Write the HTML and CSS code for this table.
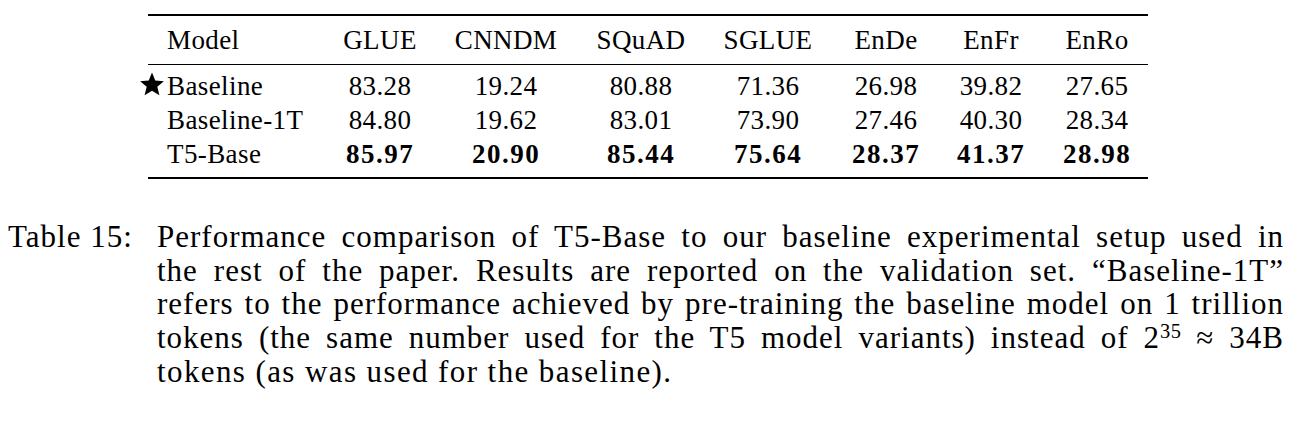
FILE: index.html
```html
<!DOCTYPE html>
<html lang="en">
<head>
<meta charset="utf-8">
<title>Table 15</title>
<link rel="stylesheet" href="styles.css">
</head>
<body>
<div class="page">
  <div class="table">
    <div class="row head">
      <div class="cell model">Model</div>
      <div class="cell">GLUE</div>
      <div class="cell">CNNDM</div>
      <div class="cell">SQuAD</div>
      <div class="cell">SGLUE</div>
      <div class="cell">EnDe</div>
      <div class="cell">EnFr</div>
      <div class="cell">EnRo</div>
    </div>
    <div class="body">
      <div class="row">
        <div class="cell model"><svg class="star" viewBox="0 0 24 24" aria-hidden="true"><polygon points="12,0.5 15.1,8.2 23.4,8.8 17.1,14.2 19.1,22.3 12,17.9 4.9,22.3 6.9,14.2 0.6,8.8 8.9,8.2"/></svg>Baseline</div>
        <div class="cell">83.28</div>
        <div class="cell">19.24</div>
        <div class="cell">80.88</div>
        <div class="cell">71.36</div>
        <div class="cell">26.98</div>
        <div class="cell">39.82</div>
        <div class="cell">27.65</div>
      </div>
      <div class="row">
        <div class="cell model">Baseline-1T</div>
        <div class="cell">84.80</div>
        <div class="cell">19.62</div>
        <div class="cell">83.01</div>
        <div class="cell">73.90</div>
        <div class="cell">27.46</div>
        <div class="cell">40.30</div>
        <div class="cell">28.34</div>
      </div>
      <div class="row">
        <div class="cell model">T5-Base</div>
        <div class="cell best">85.97</div>
        <div class="cell best">20.90</div>
        <div class="cell best">85.44</div>
        <div class="cell best">75.64</div>
        <div class="cell best">28.37</div>
        <div class="cell best">41.37</div>
        <div class="cell best">28.98</div>
      </div>
    </div>
  </div>
  <div class="caption">
    <div class="label">Table 15:</div>
    <div class="text">
      <span class="line">Performance comparison of T5-Base to our baseline experimental setup used in</span>
      <span class="line">the rest of the paper. Results are reported on the validation set. “Baseline-1T”</span>
      <span class="line">refers to the performance achieved by pre-training the baseline model on 1 trillion</span>
      <span class="line">tokens (the same number used for the T5 model variants) instead of 2<sup class="sup">35</sup> ≈ 34B</span>
      <span class="line last">tokens (as was used for the baseline).</span>
    </div>
  </div>
</div>
</body>
</html>
```
FILE: styles.css
```css
html, body {
  margin: 0;
  padding: 0;
  background: #ffffff;
}

body {
  color: #000000;
  font-family: "Liberation Serif", "Times New Roman", serif;
}

.page {
  padding: 14px 0 0 8px;
}

.table {
  margin-left: 140px;
  width: 1000px;
  border-top: 2px solid #000;
  border-bottom: 2px solid #000;
  font-size: 27px;
  letter-spacing: 0.4px;
}

.row {
  display: grid;
  grid-template-columns: 182px 100px 152px 118px 136px 100px 110px 102px;
  line-height: 34px;
  height: 34px;
}

.head {
  height: 48px;
  align-items: center;
  border-bottom: 1px solid #000;
}

.body {
  padding: 4px 0 6px;
}

.cell {
  text-align: center;
  white-space: nowrap;
}

.cell.model {
  text-align: left;
  padding-left: 19px;
}

.best {
  font-weight: bold;
  letter-spacing: 1.5px;
}

.star {
  display: inline-block;
  width: 26px;
  height: 25px;
  margin-left: -28px;
  margin-right: 2px;
  vertical-align: -2px;
  fill: #000;
}

.caption {
  display: flex;
  margin-top: 41px;
  font-size: 31px;
  letter-spacing: 1px;
  line-height: 33.7px;
}

.label {
  flex: none;
  width: 149px;
  white-space: nowrap;
}

.text {
  flex: none;
  width: 1127px;
}

.line {
  display: block;
  text-align: justify;
  text-align-last: justify;
  white-space: nowrap;
}

.line.last {
  text-align-last: left;
  letter-spacing: 1.4px;
}

.sup {
  font-size: 0.66em;
  line-height: 0;
  vertical-align: 0.5em;
  letter-spacing: 0.5px;
}
```
